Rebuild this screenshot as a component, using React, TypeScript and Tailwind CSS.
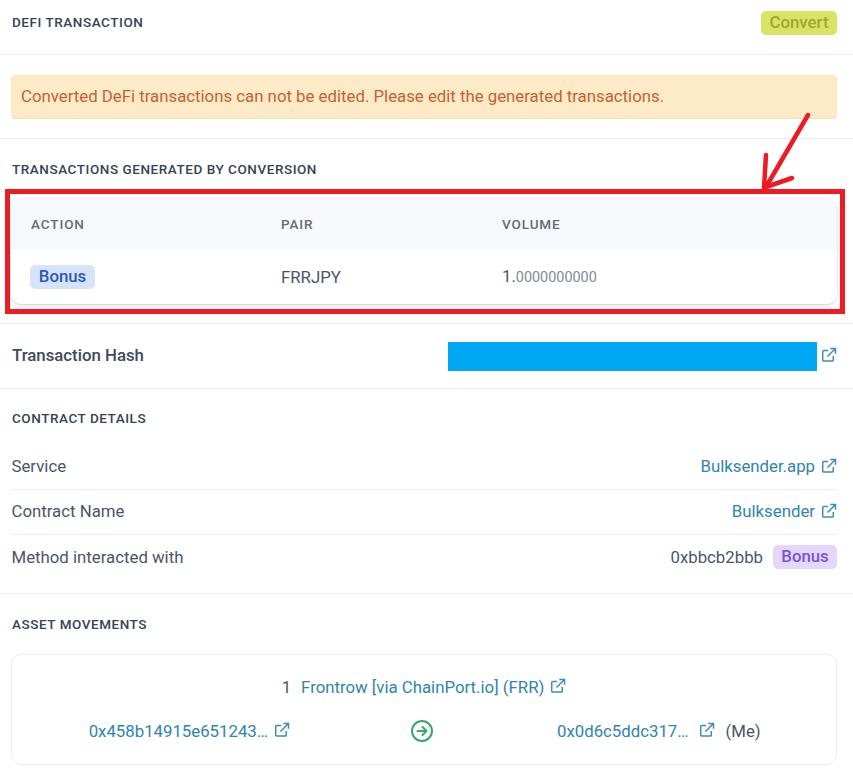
import React from "react";

function Ext({ className = "" }: { className?: string }) {
  return (
    <svg viewBox="0 0 16 16" fill="none" stroke="#3b8db3" strokeWidth="1.5" className={"w-[16px] h-[16px] shrink-0 " + className}>
      <path d="M7 3.4H2.8c-.6 0-1.1.5-1.1 1.1v8.4c0 .6.5 1.1 1.1 1.1h8.4c.6 0 1.1-.5 1.1-1.1V9" />
      <path d="M6.5 9.5 14.2 1.8M9.3 1.5h5.2v5.2" />
    </svg>
  );
}

const Title = ({ children }: { children: React.ReactNode }) => (
  <div className="pl-[1px] text-[13.5px] leading-[16px] font-medium tracking-[0.55px] text-[#344357]">{children}</div>
);

const link = "text-[#2f85ad]";

function Row({ label, children, border = true, cls }: { label: string; children: React.ReactNode; border?: boolean; cls: string }) {
  return (
    <div className={"flex items-center justify-between pb-[2px] " + cls + (border ? " border-b border-[#ececec]" : "")}>
      <span className="text-[#4a5668] pl-[0.5px]">{label}</span>
      <div className="flex items-center">{children}</div>
    </div>
  );
}

export default function App() {
  return (
    <div className="relative w-[853px] h-[775px] overflow-hidden bg-white text-[16.8px] leading-[22px] text-[#4a5668] font-['Roboto',sans-serif]">
      <div className="h-[55px] pt-[11px] px-[11px] pr-[16px] border-b border-[#ececec] flex justify-between items-start">
        <div className="pt-[3px]"><Title>DEFI TRANSACTION</Title></div>
        <span className="w-[76px] h-[24px] text-center rounded-[5px] bg-[#dbe367] text-[#a0a82f] font-medium leading-[23px]">Convert</span>
      </div>

      <div className="h-[84px] pt-[20px] px-[11px] pr-[16px] border-b border-[#ececec]">
        <div className="h-[44px] rounded-[4px] bg-[#fdebc8] border-b border-[#f0dfbd] px-[10px] pb-[2px] flex items-center text-[#c4622f]">
          Converted DeFi transactions can not be edited. Please edit the generated transactions.
        </div>
      </div>

      <div className="h-[185px] border-b border-[#ececec]">
        <div className="pt-[22px] pl-[11px] pb-[12px]"><Title>TRANSACTIONS GENERATED BY CONVERSION</Title></div>
        <div className="mx-[5px] mr-[8px] h-[125px] border-[5px] border-[#ed1c24] pt-[4px] px-[1px]">
          <div className="w-[826px] h-[106px] rounded-[10px] overflow-hidden shadow-[0_1px_3px_rgba(0,0,0,0.2)]">
            <div className="h-[52px] bg-[#f7f8fb] flex items-center text-[13.5px] font-medium tracking-[0.9px] text-[#636c75]">
              <div className="w-[270px] pl-[20px]">ACTION</div>
              <div className="w-[221px]">PAIR</div>
              <div>VOLUME</div>
            </div>
            <div className="h-[54px] bg-white flex items-center">
              <div className="w-[270px] pl-[19px]">
                <span className="inline-block w-[65px] h-[24px] rounded-[5px] bg-[#d6e4fb] text-center font-medium text-[#2958bb] leading-[23px]">Bonus</span>
              </div>
              <div className="w-[221px]">FRRJPY</div>
              <div>1.<span className="text-[14.4px] text-[#808b97]">0000000000</span></div>
            </div>
          </div>
        </div>
      </div>

      <div className="h-[65px] pl-[12px] pr-[16px] border-b border-[#ececec] flex items-center justify-between">
        <span className="text-[16.8px] font-medium text-[#3d4a5c] pb-[2px]">Transaction Hash</span>
        <div className="flex items-center">
          <div className="w-[369px] h-[29px] bg-[#00a8f3] mt-[1px]" />
          <Ext className="ml-[4px] -mt-[2px]" />
        </div>
      </div>

      <div className="h-[205px] pl-[11px] pr-[16px] border-b border-[#ececec]">
        <div className="pt-[21px] pb-[19px]"><Title>CONTRACT DETAILS</Title></div>
        <Row label="Service" cls="h-[45px]">
          <span className={link}>Bulksender.app</span>
          <Ext className="ml-[6px]" />
        </Row>
        <Row label="Contract Name" cls="h-[45px]">
          <span className={link}>Bulksender</span>
          <Ext className="ml-[6px]" />
        </Row>
        <Row label="Method interacted with" border={false} cls="h-[46px]">
          <span>0xbbcb2bbb</span>
          <span className="ml-[10px] w-[64px] h-[24px] rounded-[5px] bg-[#e5d7fb] text-center font-medium text-[#7d52d1] leading-[23px]">Bonus</span>
        </Row>
      </div>

      <div className="pl-[11px] pr-[16px]">
        <div className="pt-[22px] pb-[22px]"><Title>ASSET MOVEMENTS</Title></div>
        <div className="h-[111px] rounded-[10px] border border-[#ececec]">
          <div className="pt-[21px] flex items-center justify-center">
            <span>1</span>
            <span className={link + " ml-[10px]"}>Frontrow [via ChainPort.io] (FRR)</span>
            <Ext className="ml-[6px] -mt-[2px]" />
          </div>
          <div className="mt-[21px] flex items-center">
            <div className="w-[278px] flex items-center justify-end shrink-0">
              <span className={link}>0x458b14915e651243…</span>
              <Ext className="ml-[6px] -mt-[2px]" />
            </div>
            <svg viewBox="0 0 24 24" fill="none" stroke="#36a76b" strokeWidth="2" strokeLinecap="round" strokeLinejoin="round" className="w-[24px] h-[24px] ml-[120px] shrink-0">
              <circle cx="12" cy="12" r="10" />
              <path d="M7.5 12h9M12.5 8l4 4-4 4" />
            </svg>
            <div className="flex items-center ml-[123px]">
              <span className={link}>0x0d6c5ddc317…</span>
              <Ext className="ml-[10px] -mt-[2px]" />
              <span className="ml-[11px]">(Me)</span>
            </div>
          </div>
        </div>
      </div>

      <svg viewBox="0 0 853 775" className="absolute inset-0 w-[853px] h-[775px] pointer-events-none" fill="none" stroke="#ed1c24" strokeWidth="4.5" strokeLinecap="round" strokeLinejoin="round">
        <path d="M808 115 766 187M766 155 764 188M792 178 766 187" />
      </svg>
    </div>
  );
}
